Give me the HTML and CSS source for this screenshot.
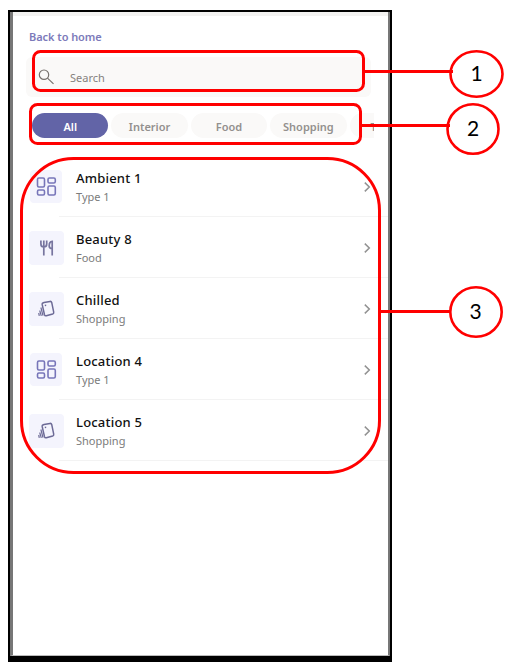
FILE: index.html
```html
<!DOCTYPE html>
<html lang="en">
<head>
<meta charset="utf-8">
<title>Places</title>
<link rel="stylesheet" href="styles.css">
</head>
<body>
<svg class="symbols" width="0" height="0">
  <symbol id="grid" viewBox="0 0 35 34"><g fill="none" stroke="#7775b9" stroke-width="1.6"><rect x="8.5" y="8" width="7" height="9" rx="1.4"/><rect x="19" y="8" width="7.3" height="5" rx="1.4"/><rect x="8.5" y="20" width="7" height="5" rx="1.4"/><rect x="19" y="16" width="7.3" height="9" rx="1.4"/></g></symbol>
  <symbol id="food" viewBox="0 0 35 34"><g fill="none" stroke="#77759f" stroke-width="1.7"><path d="M11.9 9.5v3.5q0 3 2.9 3t2.9-3v-3.5M14.8 9.5V24.5"/><path d="M23.2 24.5V10.4q-3 .1-3 4.6 0 2.5 3 2.5"/></g></symbol>
  <symbol id="card" viewBox="0 0 35 34"><g fill="none" stroke="#6c6a96" stroke-width="1.5"><path d="M15 10.6l6-1.2q1.3-.2 1.7 1l2 9.8q.2 1.4-1 1.8l-6.4 1.7q-1.4.3-1.8-1l-2.3-10q-.3-1.6 1.8-2.1z"/><path d="M11.9 15.5l2.1 8.2M10.7 18.5l1.6 5.3M9.7 21l.6 2.8" stroke-width="1.2"/><path d="M15.8 13.4h1.4"/></g></symbol>
  <symbol id="chevron" viewBox="0 0 8 12"><path d="M1.8 1.6L6.3 6 1.8 10.4" fill="none" stroke="#929292" stroke-width="1.5"/></symbol>
</svg>
<main class="phone">
  <div class="screen">
    <a class="back">Back to home</a>
    <div class="search">
      <svg width="17" height="16" viewBox="0 0 17 16"><g fill="none" stroke="#77716d" stroke-width="1.2"><circle cx="6" cy="5.7" r="4.7"/><path d="M9.5 9.1l6 5.8"/></g></svg>
      <span>Search</span>
    </div>
    <nav class="chips">
      <span class="chip active">All</span><span class="chip">Interior</span><span class="chip">Food</span><span class="chip">Shopping</span><span class="chip">Type 1</span>
    </nav>
    <ul class="list">
      <li><span class="tile small"><svg><use href="#grid"/></svg></span><div class="text"><b>Ambient 1</b><small>Type 1</small></div><svg class="chev"><use href="#chevron"/></svg></li>
      <li><span class="tile"><svg><use href="#food"/></svg></span><div class="text"><b>Beauty 8</b><small>Food</small></div><svg class="chev"><use href="#chevron"/></svg></li>
      <li><span class="tile"><svg><use href="#card"/></svg></span><div class="text"><b>Chilled</b><small>Shopping</small></div><svg class="chev"><use href="#chevron"/></svg></li>
      <li><span class="tile small"><svg><use href="#grid"/></svg></span><div class="text"><b>Location 4</b><small>Type 1</small></div><svg class="chev"><use href="#chevron"/></svg></li>
      <li><span class="tile"><svg><use href="#card"/></svg></span><div class="text"><b>Location 5</b><small>Shopping</small></div><svg class="chev"><use href="#chevron"/></svg></li>
    </ul>
  </div>
</main>
<svg class="notes" width="520" height="669" viewBox="0 0 520 669">
  <g fill="none" stroke="#ff0000" stroke-width="3">
    <rect x="33.5" y="51.5" width="330" height="39" rx="7"/>
    <rect x="30.5" y="104.5" width="330" height="39" rx="7"/>
    <rect x="21.5" y="158.5" width="358" height="314" rx="52"/>
    <path d="M364 71.5H452M361 125.5H449M380 311.5H450"/>
  </g>
  <g fill="#fff" stroke="#ff0000" stroke-width="2.6">
    <ellipse cx="476.5" cy="74" rx="26" ry="22.7"/>
    <ellipse cx="473" cy="129" rx="25.5" ry="24.7"/>
    <ellipse cx="476" cy="312" rx="25.7" ry="24.7"/>
  </g>
  <path d="M449 71.5h4M446 125.5h4" stroke="#ff0000" stroke-width="3"/>
  <g class="numbers"><text x="476.5" y="81">1</text><text x="473" y="136">2</text><text x="475.5" y="319">3</text></g>
</svg>
</body>
</html>
```
FILE: styles.css
```css
* { box-sizing: border-box; }
body { margin: 0; background: #fff; font-family: "Noto Sans", sans-serif; }
.symbols { display: block; height: 0; }
.phone {
  width: 384px;
  height: 652px;
  margin: 10px 0 0 8px;
  border: 2px solid #000;
  border-bottom-width: 6px;
}
.screen {
  height: 644px;
  padding: 14px 0 0 16px;
  border-left: 3px solid #777;
  border-right: 2px solid #777;
  border-bottom: 1px solid #bbb;
  background: linear-gradient(#f3f2f1 4px, #fff 4px);
}
.back {
  display: block;
  height: 31px;
  font-size: 11px;
  font-weight: 600;
  line-height: 22px;
  letter-spacing: -0.06px;
  color: #7c7aba;
}
.search {
  display: flex;
  align-items: center;
  gap: 15px;
  width: 345px;
  height: 40px;
  margin-left: -3px;
  padding-left: 12px;
  border-radius: 6px;
  background: #faf9f8;
  font-size: 11px;
  color: #85817e;
}
.search span { padding-top: 1px; }
.chips {
  display: flex;
  gap: 3px;
  width: 342px;
  margin: 16px 0 0 3px;
  overflow: hidden;
}
.chip {
  flex: 0 0 76.4px;
  height: 25px;
  border-radius: 13px;
  background: #faf9f8;
  font-size: 11px;
  font-weight: 600;
  line-height: 28px;
  text-align: center;
  color: #93908e;
}
.chip.active { background: #6264a7; color: #fff; }
.list { margin: 18px 0 0; padding: 0; list-style: none; }
.list li {
  display: flex;
  align-items: center;
  height: 61px;
  padding-right: 17px;
  background: linear-gradient(#f3f3f3, #f3f3f3) 30px 100% / calc(100% - 30px) 1px no-repeat;
}
.tile {
  display: flex;
  align-items: center;
  justify-content: center;
  width: 35px;
  height: 34px;
  border-radius: 4px;
  background: #f4f4fd;
}
.tile.small { width: 32px; height: 33px; margin: 0 2px 0 1px; }
.tile svg { flex: none; width: 35px; height: 34px; }
.text { flex: 1; padding: 3px 0 0 12px; }
.text b, .text small { display: block; }
.text b { height: 18px; font-size: 13px; font-weight: 500; letter-spacing: 0.2px; line-height: 16px; color: #111; }
.text small { font-size: 11px; line-height: 18px; color: #7b7b7b; }
.chev { width: 8px; height: 12px; }
.notes { position: absolute; top: 0; left: 0; }
.numbers { font: 21px Lato, sans-serif; text-anchor: middle; fill: #000; }
```
